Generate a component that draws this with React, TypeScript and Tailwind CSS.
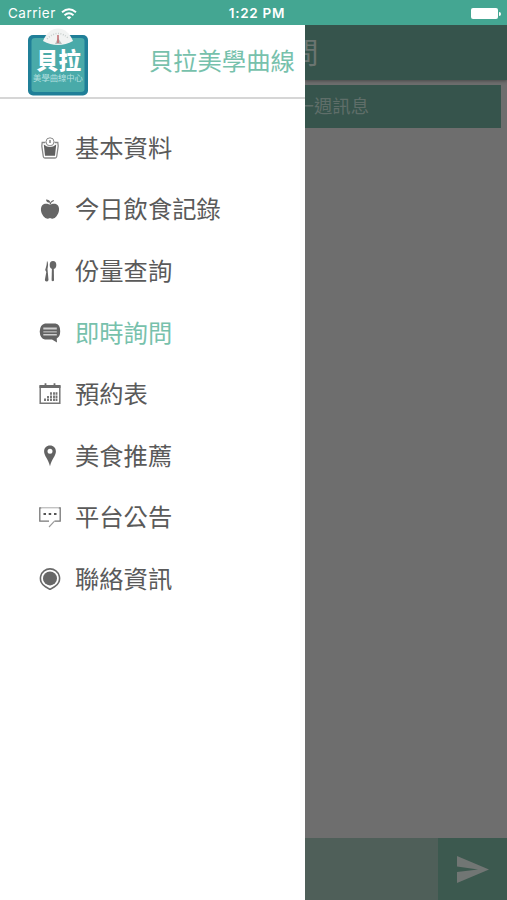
import type { ReactNode } from 'react'

type MenuItem = {
    label: string;
    icon: ReactNode;
    active?: boolean;
}

const menu: MenuItem[] = [
    {
        label: '基本資料',
        icon: (
            <>
                <path d="M6.500 5.500H3.200L2.800 9l1.500 10.500q.2 1.500 1.500 1.500h10.400q1.300 0 1.500-1.500L19.200 9l-.4-3.500H15.500" fill="none" stroke="#8a8a8a" strokeWidth="1.300" />
                <path d="M4.800 7.500q6.200 5 12.400 0L16 18.700H6Z" fill="#606060" />
                <circle cx="11" cy="4.800" r="4" fill="#fff" stroke="#8a8a8a" strokeWidth="1" />
                <path d="M11 3v3" stroke="#666" strokeWidth="1.200" />
            </>
        ),
    },
    {
        label: '今日飲食記錄',
        icon: (
            <>
                <path d="M11 6.800C13 5.500 17.500 4.800 19.300 8c1.800 3.500.2 8.500-2.800 11.300-1.800 1.800-3.700 1.500-5.500.8-1.800.7-3.700 1-5.500-.8C2.500 16.500.9 11.500 2.700 8 4.500 4.800 9 5.500 11 6.800Z" fill="#666" />
                <path d="M7 1.500c2.500 0 4 1 4.300 3.300C8.800 5 7.200 3.800 7 1.500Z" fill="#666" />
                <path d="M11 6.500q.5-3 3.800-4" fill="none" stroke="#666" strokeWidth="1.200" />
            </>
        ),
    },
    {
        label: '份量查詢',
        icon: (
            <>
                <path d="M8 .8C9.500 3 9.200 6 8.500 9l1 11q-.3 1.500-2 1.500-1.700-.2-1.600-1.700L7.300 12 6.200 10Q8 5 8 .8Z" fill="#666" />
                <ellipse cx="14" cy="5" rx="3.300" ry="4" fill="#666" />
                <path d="M12.900 8h1.900l.2 12.500q-1.100 1.300-2.400 0Z" fill="#666" />
            </>
        ),
    },
    {
        label: '即時詢問',
        active: true,
        icon: (
            <>
                <path d="M6 1.500h10.500q4.700.5 4.700 7.800 0 5.500-3.500 7.200L18 20.500 13 17.500H6Q1 16.500.7 9.500 1 2.500 6 1.500Z" fill="#636363" />
                <path d="M4.300 5.500h13.500v2H4.300ZM4.300 12h13.500v1.500H4.300Z" fill="#cfcfcf" />
                <path d="M4.300 9.800h13.500" stroke="#a8a8a8" strokeWidth="1.600" />
            </>
        ),
    },
    {
        label: '預約表',
        icon: (
            <>
                <path d="M1.200 2.500v17.800h19.600V2.500" fill="none" stroke="#777" strokeWidth="1.500" />
                <path d="M.5 2h21v3H.5Z" fill="#6c6c6c" />
                <path d="M6.500.3v3M15.500.3v3" stroke="#6c6c6c" strokeWidth="1.800" />
                <path d="M6 18v-3M9 18v-5M12 18V9M15 18V9M17.500 18V9" stroke="#737373" strokeWidth="1.900" strokeDasharray="2.500 .6" />
            </>
        ),
    },
    {
        label: '美食推薦',
        icon: (
            <path
                d="M11 .6c3.600 0 5.900 2.600 5.900 5.800 0 4.300-4.200 7.500-5.900 14.800C9.300 13.900 5.100 10.700 5.100 6.400 5.100 3.200 7.400.6 11 .6Zm0 3.200a2.500 2.500 0 1 0 0 5 2.500 2.500 0 0 0 0-5Z"
                fill="#636363"
                fillRule="evenodd"
            />
        ),
    },
    {
        label: '平台公告',
        icon: (
            <>
                <path d="M2.500 1.800H.8v13.400H10M19.500 1.800h1.700v13.400H15.500" fill="none" stroke="#777" strokeWidth="1.300" />
                <path d="M2.500 1.800h17" stroke="#aaa" strokeWidth="1" />
                <path d="M15.500 15.200 10 21" stroke="#999" strokeWidth="1.100" />
                <path d="M4.500 8h2.500M9.700 8h2.500M15 8h2.500" stroke="#555" strokeWidth="2.200" />
            </>
        ),
    },
    {
        label: '聯絡資訊',
        icon: (
            <>
                <path d="M11 .9a9.500 9.500 0 0 1 4.500 17.900L11 21.400 6.500 18.800A9.500 9.500 0 0 1 11 .9Z" fill="none" stroke="#6a6a6a" strokeWidth="1.600" />
                <circle cx="11" cy="10.400" r="7" fill="#686868" />
            </>
        ),
    },
];

function StatusBar() {
    return (
        <div className="grid h-[25px] shrink-0 grid-cols-3 items-center bg-[#44a692] pt-[2px] pr-[6px] pl-[8px] font-['Inter','Liberation_Sans',sans-serif] text-white">
            <div className="flex items-center gap-[5px] text-[13.500px] tracking-[0.500px]">
                Carrier
                <svg width="16" height="12" viewBox="0 0 16 12" fill="none" stroke="white" strokeWidth="1.900">
                    <path d="M1 4.300q7-6 14 0M3.500 7.200q4.500-3.800 9 0" />
                    <path d="M5.700 9.200q2.300-1.900 4.600 0L8 11.500Z" fill="white" stroke="none" />
                </svg>
            </div>
            <div className="pl-[5px] text-center text-[13.500px] font-semibold tracking-[0.700px]">1:22 PM</div>
            <div className="flex items-center justify-end gap-[1px]">
                <div className="h-[11.500px] w-[27px] rounded-[2px] bg-white" />
                <div className="h-[4px] w-[2px] rounded-r-full bg-white" />
            </div>
        </div>
    );
}

function Logo() {
    return (
        <svg width="62" height="69" viewBox="0 0 62 69" className="shrink-0 font-['Noto_Sans_CJK_TC',sans-serif]">
            <rect x="1" y="8" width="60" height="60.500" rx="5" fill="#207f98" />
            <path d="M8 11h46q3.500 0 3.500 3v48q0 3-3.500 3H8q-3.500 0-3.500-3V14q0-3 3.500-3Z" fill="#49aaa9" />
            <path d="M16 14C19 6 25 1.500 31 1.500S43 6 46 14q-7 4-15 4t-15-4Z" fill="#f1f3f2" />
            <path d="M20 12q11-11 22 0" fill="none" stroke="#c8cfcd" strokeWidth="1.500" strokeDasharray="1 1.500" />
            <path d="M28 17l3-6 4 6Z" fill="#b9bcbc" />
            <path d="M31 8v8" stroke="#c0686c" strokeWidth="1.500" />
            <text x="31.500" y="42" textAnchor="middle" fontSize="22.500" fontWeight="900" fill="white">貝拉</text>
            <text x="31" y="54" textAnchor="middle" fontSize="8.300" fill="#b5e0e0">美學曲線中心</text>
        </svg>
    );
}

function Drawer() {
    return (
        <aside className="w-[304.500px] shrink-0 bg-white">
            <div className="flex h-[74px] items-start justify-between border-b-2 border-[#d6d6d6] pt-[2px] pr-[9.500px] pl-[27px]">
                <Logo />
                <h1 className="pt-[15px] text-[24.400px] leading-[36px] font-normal text-[#77c1ac]">貝拉美學曲線</h1>
            </div>
            <nav className="pt-[18px]">
                {menu.map((item) => (
                    <div key={item.label} className="flex h-[61.600px] items-center gap-[14px] pl-[39px]">
                        <svg width="22" height="22" viewBox="0 0 22 22">{item.icon}</svg>
                        <span className={`-mt-[2px] text-[24.300px] leading-[36px] font-normal ${item.active ? 'text-[#77c1ac]' : 'text-[#5a5a5a]'}`}>
                            {item.label}
                        </span>
                    </div>
                ))}
            </nav>
        </aside>
    );
}

// Page behind the drawer, dimmed
function ChatPage() {
    return (
        <main className="flex min-w-0 flex-1 flex-col overflow-hidden bg-[#6e6e6e]">
            <header className="flex h-[55px] items-center bg-[#36544c] shadow-[0_1px_3px_#484848]">
                <span className="-mt-[3px] -ml-[15px] text-[29px] leading-[40px] font-normal text-[#6b7571]">問</span>
            </header>
            <div className="mt-[5px] mr-[6.500px] flex h-[43px] items-center bg-[#36544c]">
                <span className="-mt-[3px] -ml-[9px] text-[18.400px] leading-[28px] font-normal text-[#5f6e69]">一週訊息</span>
            </div>
            <div className="flex-1" />
            <footer className="flex h-[62px]">
                <div className="flex-1 bg-[#4f5f59]" />
                <div className="flex w-[69px] items-center bg-[#3c594f] pl-[18.500px]">
                    <svg width="32" height="27" viewBox="0 0 32 27" fill="#717674">
                        <path d="M0 0 32 13.500 0 27V16l21-2.500L0 10.500Z" />
                    </svg>
                </div>
            </footer>
        </main>
    );
}

export default function App() {
    return (
        <div className="flex h-screen flex-col overflow-hidden font-['Noto_Sans_CJK_TC',sans-serif]">
            <StatusBar />
            <div className="flex min-h-0 flex-1">
                <Drawer />
                <ChatPage />
            </div>
        </div>
    );
}
